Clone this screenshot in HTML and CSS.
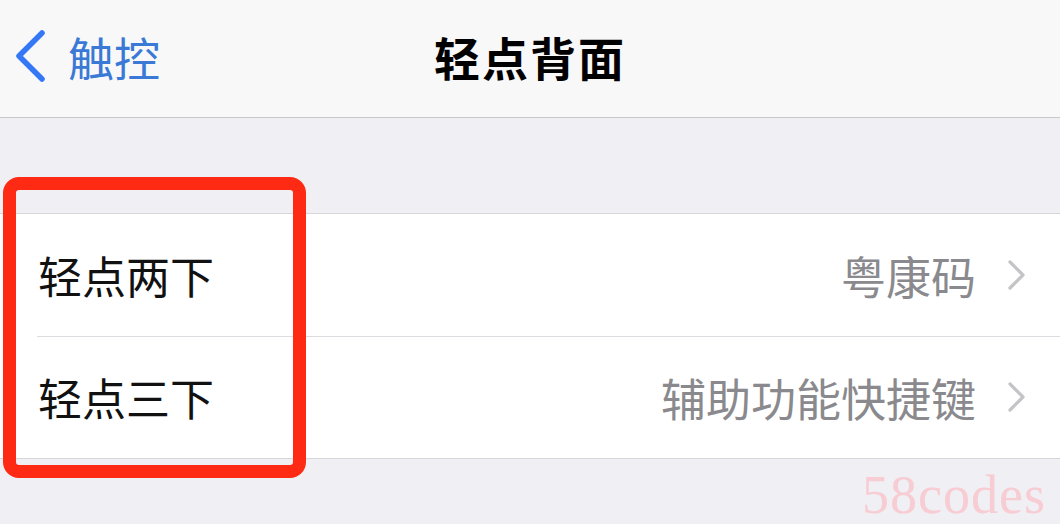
FILE: index.html
```html
<!DOCTYPE html>
<html lang="zh-CN">
<head>
  <meta charset="UTF-8" />
  <meta name="viewport" content="width=device-width, initial-scale=1.0" />
  <title>轻点背面</title>
  <link rel="stylesheet" href="styles.css">
</head>
<body>
  <div class="screen">
    <header class="navbar">
      <a class="back" href="#">
        <svg class="back-icon" width="34" height="54" viewBox="0 0 34 54">
          <path d="M28 4 L5 27 L28 50" fill="none" stroke="#3478f6" stroke-width="5.5" stroke-linecap="round" stroke-linejoin="round"/>
        </svg>
        <span>触控</span>
      </a>
      <h1 class="title">轻点背面</h1>
      <div></div>
    </header>

    <div class="group-gap"></div>

    <ul class="list">
      <li class="row">
        <span class="label">轻点两下</span>
        <span class="value">粤康码</span>
        <svg class="chevron" width="20" height="32" viewBox="0 0 20 32">
          <path d="M4 3 L17 16 L4 29" fill="none" stroke="#c4c4c7" stroke-width="3.2" stroke-linecap="round" stroke-linejoin="round"/>
        </svg>
      </li>
      <li class="row">
        <span class="label">轻点三下</span>
        <span class="value">辅助功能快捷键</span>
        <svg class="chevron" width="20" height="32" viewBox="0 0 20 32">
          <path d="M4 3 L17 16 L4 29" fill="none" stroke="#c4c4c7" stroke-width="3.2" stroke-linecap="round" stroke-linejoin="round"/>
        </svg>
      </li>
    </ul>

    <!-- annotation drawn over the list -->
    <div class="highlight"></div>
    <div class="watermark">58codes</div>
  </div>
</body>
</html>
```

FILE: styles.css
```css
/* Base */
* { margin: 0; padding: 0; box-sizing: border-box; }
body {
  font-family: "Noto Sans CJK SC", "Noto Sans", sans-serif;
  background: #efeff4;
  color: #000;
}
.screen {
  position: relative;
  width: 1060px;
  height: 524px;
  overflow: hidden;
}

/* Nav bar */
.navbar {
  height: 118px;
  background: #f8f8f8;
  border-bottom: 1px solid #c8c8cc;
  display: grid;
  grid-template-columns: 1fr auto 1fr;
  align-items: center;
  padding-bottom: 6px;
}
.back {
  display: flex;
  align-items: center;
  gap: 20px;
  padding-left: 14px;
  color: #3478f6;
  text-decoration: none;
  font-size: 46px;
}
.back span { color: #3a79d6; }
.title {
  font-size: 46px;
  font-weight: 700;
  letter-spacing: 2px;
}

/* List */
.group-gap { height: 95px; }
.list {
  list-style: none;
  background: #fff;
  border-top: 1px solid #d6d6da;
  border-bottom: 1px solid #d6d6da;
}
.row {
  position: relative;
  height: 122px;
  display: flex;
  align-items: center;
  padding: 0 34px 0 38px;
  font-size: 44px;
}
.row + .row::before {
  content: "";
  position: absolute;
  top: 0;
  left: 37px;
  right: 0;
  height: 1px;
  background: #dcdce0;
}
.label { flex: 1; color: #111; }
.value { color: #8a8a8e; margin-right: 30px; font-size: 45px; }
.chevron { flex-shrink: 0; }

/* Overlays */
.highlight {
  position: absolute;
  left: 3px;
  top: 177px;
  width: 303px;
  height: 301px;
  border: 13px solid #ff2a14;
  border-radius: 16px;
}
.watermark {
  position: absolute;
  right: 14px;
  bottom: -2px;
  font-family: "Liberation Serif", serif;
  font-size: 54px;
  color: #f7ccd2;
  letter-spacing: 1px;
}
```
